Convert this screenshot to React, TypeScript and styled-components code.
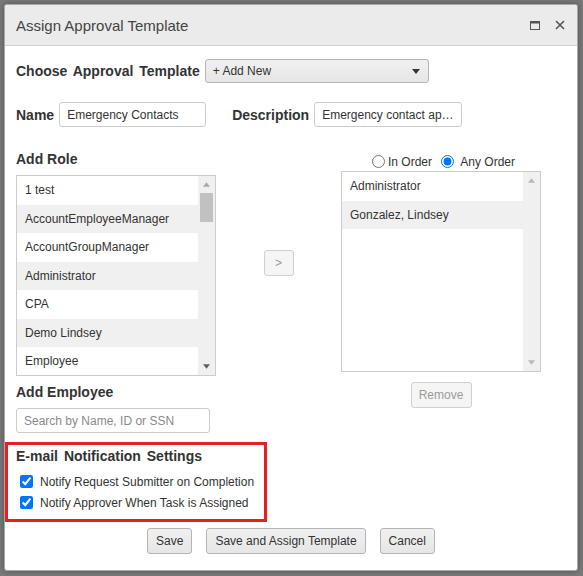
import styled, { createGlobalStyle } from 'styled-components'

const GlobalStyle = createGlobalStyle`
	html, body {
		margin: 0;
		padding: 0;
	}

	body {
		background: #7a7a7a;
		font-family: "Liberation Sans", Arial, sans-serif;
		font-size: 12px;
		color: #333;
	}

	input, button {
		font-family: "Liberation Sans", Arial, sans-serif;
	}
`

const Overlay = styled.div`
	width: 583px;
	height: 576px;
	padding: 4px 0 0 4px;
	box-sizing: border-box;
	overflow: hidden;
`

const Dialog = styled.div`
	width: 574px;
	height: 567px;
	box-sizing: border-box;
	background: #fff;
	border: 1px solid #a9a9a9;
	border-radius: 3px;
	box-shadow: 0 0 6px rgba(0, 0, 0, 0.35);
	display: flex;
	flex-direction: column;
	overflow: hidden;
`

const TitleBar = styled.div`
	height: 41px;
	box-sizing: border-box;
	flex-shrink: 0;
	background: #ebebeb;
	border-bottom: 1px solid #cfcfcf;
	display: flex;
	align-items: center;
	padding: 0 12px 0 11px;

	& > h1 {
		margin: 0;
		flex-grow: 1;
		font-size: 15px;
		font-weight: normal;
		color: #444;
	}
`

const TitleIcons = styled.div`
	display: flex;
	align-items: center;
	gap: 15px;
	color: #555;
`

const Body = styled.div`
	padding: 0 11px;
	display: flex;
	flex-direction: column;
`

const FieldRow = styled.div<{ $top: number }>`
	display: flex;
	align-items: center;
	gap: 5px;
	margin-top: ${p => p.$top}px;
`

const Label = styled.span<{ $lead?: number; $spread?: boolean }>`
	font-size: 14px;
	line-height: 16px;
	font-weight: bold;
	color: #333;
	white-space: nowrap;
	word-spacing: ${p => (p.$spread ? 2 : 0)}px;
	margin-left: ${p => p.$lead ?? 0}px;
`

const Dropdown = styled.div`
	width: 224px;
	height: 24px;
	box-sizing: border-box;
	border: 1px solid #b5b5b5;
	border-radius: 3px;
	background: linear-gradient(#f1f1f1, #e6e6e6);
	display: flex;
	align-items: center;
	justify-content: space-between;
	padding: 0 8px 0 7px;
	color: #333;
`

const TextInput = styled.input<{ $width: number }>`
	width: ${p => p.$width}px;
	height: 25px;
	box-sizing: border-box;
	border: 1px solid #ccc;
	border-radius: 3px;
	padding: 0 7px;
	font-size: 12px;
	color: #333;
	background: #fff;
	text-overflow: ellipsis;
	outline: none;

	&::placeholder {
		color: #8a8a8a;
	}
`

const Columns = styled.div`
	display: flex;
	margin-top: 24px;
`

const Column = styled.div<{ $width: number }>`
	width: ${p => p.$width}px;
	display: flex;
	flex-direction: column;
`

const MiddleColumn = styled.div`
	width: 125px;
	display: flex;
	justify-content: center;
	align-items: flex-start;
	padding-top: 99px;
`

const ListBox = styled.div<{ $height: number }>`
	width: 200px;
	height: ${p => p.$height}px;
	box-sizing: border-box;
	border: 1px solid #ccc;
	display: flex;
	margin-top: 8px;
`

const Items = styled.div`
	flex-grow: 1;
	overflow: hidden;
`

const Item = styled.div<{ $alt: boolean }>`
	height: 28.5px;
	line-height: 28.5px;
	padding: 0 8px;
	white-space: nowrap;
	color: #333;
	background: ${p => (p.$alt ? '#f0f0f0' : '#fff')};
`

const ScrollTrack = styled.div`
	width: 17px;
	flex-shrink: 0;
	background: #f0f0f0;
	display: flex;
	flex-direction: column;
`

const ScrollArrow = styled.div<{ $color: string }>`
	height: 17px;
	display: flex;
	align-items: center;
	justify-content: center;
	color: ${p => p.$color};
`

const ScrollThumb = styled.div`
	height: 29px;
	margin: 0 2px;
	background: #c1c1c1;
`

const ScrollSpace = styled.div`
	flex-grow: 1;
`

const SmallButton = styled.button<{ $width: number; $height: number }>`
	width: ${p => p.$width}px;
	height: ${p => p.$height}px;
	padding: 0;
	border: 1px solid #d0d0d0;
	border-radius: 3px;
	background: #f5f5f5;
	color: #9a9a9a;
	font-size: 12px;
`

const RadioRow = styled.div`
	height: 17px;
	display: flex;
	align-items: center;
	justify-content: center;
	padding-left: 5px;
	margin-bottom: -5px;

	& input {
		width: 13px;
		height: 13px;
		margin: 0 3px 0 0;
		accent-color: #0075ff;
	}

	& label {
		display: flex;
		align-items: center;
		padding-top: 3px;
		color: #333;
	}

	& label > span {
		margin-top: 2px;
	}
`

const RemoveRow = styled.div`
	display: flex;
	justify-content: center;
	margin-top: 10px;
`

const NotifyBox = styled.div`
	margin: 9px 0 0 -11px;
	width: 262px;
	box-sizing: border-box;
	border: 3px solid #e81e25;
	padding: 3px 0 6px 8px;
	display: flex;
	flex-direction: column;
`

const CheckList = styled.div`
	margin-top: 7px;
	display: flex;
	flex-direction: column;
`

const CheckRow = styled.label`
	height: 21px;
	display: flex;
	align-items: center;
	padding-left: 4px;
	color: #333;

	& input {
		width: 13px;
		height: 13px;
		margin: 0 7px 0 0;
		accent-color: #0075ff;
	}
`

const Actions = styled.div`
	display: flex;
	justify-content: center;
	gap: 14px;
	margin-top: 6px;
`

const ActionButton = styled.button`
	height: 26px;
	padding: 0 8px;
	border: 1px solid #b4b4b4;
	border-radius: 3px;
	background: linear-gradient(#f0f0f0, #e6e6e6);
	color: #333;
	font-size: 12px;
`

const MaximizeIcon = () => (
	<svg width="10" height="9" viewBox="0 0 10 9">
		<rect x="0.5" y="0.5" width="9" height="8" fill="none" stroke="currentColor" strokeWidth="1" />
		<rect x="0.5" y="0.5" width="9" height="2" fill="currentColor" />
	</svg>
)

const CloseIcon = () => (
	<svg width="10" height="10" viewBox="0 0 10 10">
		<path d="M1 1 L9 9 M9 1 L1 9" stroke="currentColor" strokeWidth="1.6" />
	</svg>
)

const Caret = ({ up, size = 7 }: { up?: boolean, size?: number }) => (
	<svg width={size} height={Math.ceil(size / 2) + 1} viewBox="0 0 8 5">
		<path d={up ? 'M0 5 L4 0 L8 5 Z' : 'M0 0 L8 0 L4 5 Z'} fill="currentColor" />
	</svg>
)

interface ScrollbarProps {
	thumb: boolean
	upColor: string
	downColor: string
}

const Scrollbar = ({ thumb, upColor, downColor }: ScrollbarProps) => (
	<ScrollTrack>
		<ScrollArrow $color={upColor}><Caret up /></ScrollArrow>
		{thumb && <ScrollThumb />}
		<ScrollSpace />
		<ScrollArrow $color={downColor}><Caret /></ScrollArrow>
	</ScrollTrack>
)

const roles = [
	'1 test',
	'AccountEmployeeManager',
	'AccountGroupManager',
	'Administrator',
	'CPA',
	'Demo Lindsey',
	'Employee',
]

const approvers = ['Administrator', 'Gonzalez, Lindsey']

const App = () => {
	return (
		<Overlay>
			<GlobalStyle />
			<Dialog>
				<TitleBar>
					<h1>Assign Approval Template</h1>
					<TitleIcons>
						<MaximizeIcon />
						<CloseIcon />
					</TitleIcons>
				</TitleBar>
				<Body>
					<FieldRow $top={13}>
						<Label $spread>Choose Approval Template</Label>
						<Dropdown>
							<span>+ Add New</span>
							<Caret size={8} />
						</Dropdown>
					</FieldRow>

					<FieldRow $top={19}>
						<Label>Name</Label>
						<TextInput $width={147} readOnly defaultValue="Emergency Contacts" />
						<Label $lead={21}>Description</Label>
						<TextInput $width={148} readOnly defaultValue="Emergency contact approval template" />
					</FieldRow>

					<Columns>
						<Column $width={200}>
							<Label>Add Role</Label>
							<ListBox $height={201}>
								<Items>
									{roles.map((role, i) => (
										<Item key={role} $alt={i % 2 === 1}>{role}</Item>
									))}
								</Items>
								<Scrollbar thumb upColor="#a8a8a8" downColor="#606060" />
							</ListBox>
							<Label style={{ marginTop: 8 }}>Add Employee</Label>
							<TextInput $width={194} placeholder="Search by Name, ID or SSN" style={{ marginTop: 8 }} />
						</Column>

						<MiddleColumn>
							<SmallButton $width={30} $height={26}>&gt;</SmallButton>
						</MiddleColumn>

						<Column $width={200}>
							<RadioRow>
								<label>
									<input type="radio" name="order" />
									<span>In Order</span>
								</label>
								<label style={{ marginLeft: 9 }}>
									<input type="radio" name="order" defaultChecked />
									<span>&nbsp;Any Order</span>
								</label>
							</RadioRow>
							<ListBox $height={201}>
								<Items>
									{approvers.map((name, i) => (
										<Item key={name} $alt={i % 2 === 1}>{name}</Item>
									))}
								</Items>
								<Scrollbar thumb={false} upColor="#b8b8b8" downColor="#b8b8b8" />
							</ListBox>
							<RemoveRow>
								<SmallButton $width={61} $height={26}>Remove</SmallButton>
							</RemoveRow>
						</Column>
					</Columns>

					<NotifyBox>
						<Label $spread>E-mail Notification Settings</Label>
						<CheckList>
							<CheckRow>
								<input type="checkbox" defaultChecked />
								Notify Request Submitter on Completion
							</CheckRow>
							<CheckRow>
								<input type="checkbox" defaultChecked />
								Notify Approver When Task is Assigned
							</CheckRow>
						</CheckList>
					</NotifyBox>

					<Actions>
						<ActionButton>Save</ActionButton>
						<ActionButton>Save and Assign Template</ActionButton>
						<ActionButton>Cancel</ActionButton>
					</Actions>
				</Body>
			</Dialog>
		</Overlay>
	)
}

export default App
